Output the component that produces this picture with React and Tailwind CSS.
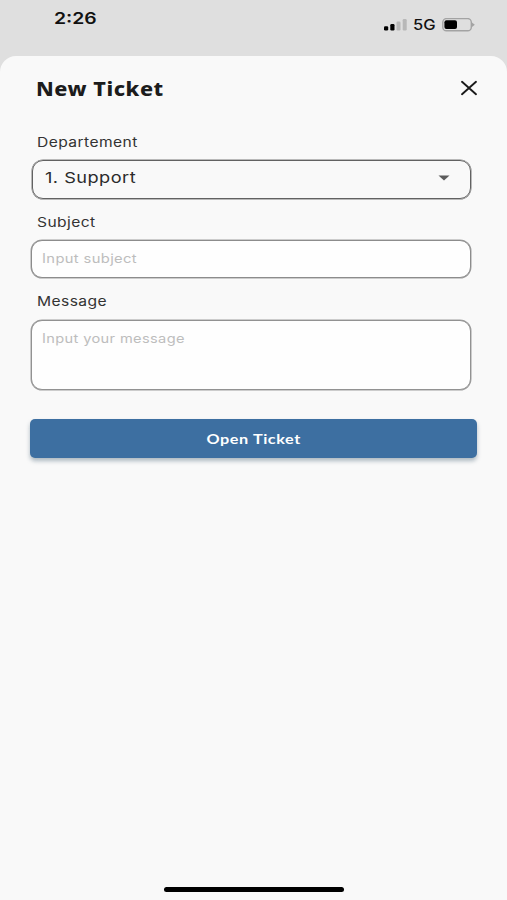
import React, { useState } from "react";

// StatusBar Component
function StatusBar() {
    return (
        <div className="flex h-[56px] items-start justify-between pr-[32px] pl-[54px] text-[#111111]">
            <span className="mt-[8px] origin-left scale-x-[1.21] text-[16px] leading-5 font-semibold">2:26</span>
            <div className="mt-[15px] flex h-5 items-center">
                <svg width="24" height="12" viewBox="0 0 24 12">
                    <rect x="1" y="7.2" width="4.2" height="4.3" rx="1.2" fill="#000" />
                    <rect x="7.3" y="5" width="4.2" height="6.5" rx="1.2" fill="#000" />
                    <rect x="13.5" y="2.5" width="4" height="9" rx="1.2" fill="#b8b8b8" />
                    <rect x="19.7" y="0" width="4" height="11.5" rx="1.2" fill="#b8b8b8" />
                </svg>
                <span className="ml-[6px] w-[28px] origin-left scale-x-[1.18] text-[14px] leading-5 font-medium">5G</span>
                <svg width="34" height="14" viewBox="0 0 34 14">
                    <rect x="1.8" y="0.6" width="28.5" height="12.2" rx="3.6" fill="none" stroke="#a3a3a3" strokeWidth="1.4" />
                    <rect x="3.4" y="2.2" width="12.6" height="8.8" rx="2" fill="#000" />
                    <path d="M31 4.4 L33.8 6.7 L31 9 Z" fill="#a3a3a3" />
                </svg>
            </div>
        </div>
    );
}

// Label Component
function Label({ htmlFor, children }) {
    return (
        <label
            htmlFor={htmlFor}
            className="ml-[6.5px] block w-fit origin-left scale-x-[1.2] text-[13px] leading-5 tracking-[0.35px] text-[#333333]"
        >
            {children}
        </label>
    );
}

export default function NewTicket() {
    const [subject, setSubject] = useState("");
    const [message, setMessage] = useState("");

    return (
        <div className="h-[900px] w-full overflow-hidden bg-[#dfdfdf] font-['Inter',sans-serif]">
            <StatusBar />
            <div className="flex h-[844px] flex-col rounded-t-[16px] bg-[#f9f9f9]">
                <div className="flex h-[64px] items-center justify-between pr-[29px] pl-[36px]">
                    <h1 className="mt-[2px] origin-left scale-x-[1.08] font-['Noto_Sans','Open_Sans',sans-serif] text-[20px] leading-7 font-extrabold tracking-[0.5px] text-[#1c1c1c]">
                        New Ticket
                    </h1>
                    <button type="button" aria-label="Close">
                        <svg width="18" height="16" viewBox="0 0 18 16" fill="none" stroke="#1a1a1a" strokeWidth="1.9" strokeLinecap="round">
                            <path d="M2 1.8 L16 14.2 M16 1.8 L2 14.2" />
                        </svg>
                    </button>
                </div>

                <form className="flex flex-col pr-[30px] pl-[30px] pt-[12px]" onSubmit={(e) => e.preventDefault()}>
                    <Label htmlFor="department">Departement</Label>
                    <button
                        id="department"
                        type="button"
                        className="mt-[8px] mr-[6px] ml-[2px] flex h-[39px] items-center justify-between rounded-[11px] border border-[#626262] pr-[20px] pb-[3px] pl-[12px] shadow-[0_0_0_0.5px_#7a7a7a]"
                    >
                        <span className="origin-left scale-x-[1.21] text-[15px] leading-5 tracking-[0.4px] text-[#2b2b2b]">1. Support</span>
                        <svg width="12" height="6" viewBox="0 0 12 6">
                            <path d="M0.5 0.5 H11.5 L6 5.5 Z" fill="#5c5c5c" />
                        </svg>
                    </button>

                    <div className="mt-[13px]">
                        <Label htmlFor="subject">Subject</Label>
                    </div>
                    <div className="mt-[8px] mr-[6px] ml-[1px] h-[38px] rounded-[11px] border border-[#8c8c8c] bg-[#fefefe] pl-[10px] shadow-[0_0_0_0.5px_#a0a0a0]">
                        <input
                            id="subject"
                            type="text"
                            placeholder="Input subject"
                            className="block h-[34px] w-[330px] origin-left scale-x-[1.18] text-[12.5px] tracking-[0.3px] text-[#2b2b2b] outline-none placeholder:text-[#bdbdbd]"
                            value={subject}
                            onChange={(e) => setSubject(e.target.value)}
                        />
                    </div>

                    <div className="mt-[13px]">
                        <Label htmlFor="message">Message</Label>
                    </div>
                    <div className="mt-[9px] mr-[6px] ml-[1px] h-[70px] rounded-[11px] border border-[#929292] bg-[#fefefe] pt-[7px] pl-[10px] shadow-[0_0_0_0.5px_#a0a0a0]">
                        <textarea
                            id="message"
                            placeholder="Input your message"
                            className="block h-[56px] w-[330px] origin-left scale-x-[1.17] resize-none text-[12.5px] leading-[22px] tracking-[0.3px] text-[#2b2b2b] outline-none placeholder:text-[#bdbdbd]"
                            value={message}
                            onChange={(e) => setMessage(e.target.value)}
                        />
                    </div>

                    <button
                        type="submit"
                        className="mt-[29px] flex h-[39px] items-center justify-center rounded-[5px] bg-[#3d6fa1] font-['Lato',sans-serif] text-[14px] leading-5 font-bold text-white shadow-[0_3px_4px_rgba(60,90,110,0.4)]"
                    >
                        <span className="scale-x-[1.16] tracking-[0.5px]">Open Ticket</span>
                    </button>
                </form>

                <div className="mt-auto mb-[8px] ml-[164px] h-[5px] w-[180px] rounded-full bg-black" />
            </div>
        </div>
    );
}
